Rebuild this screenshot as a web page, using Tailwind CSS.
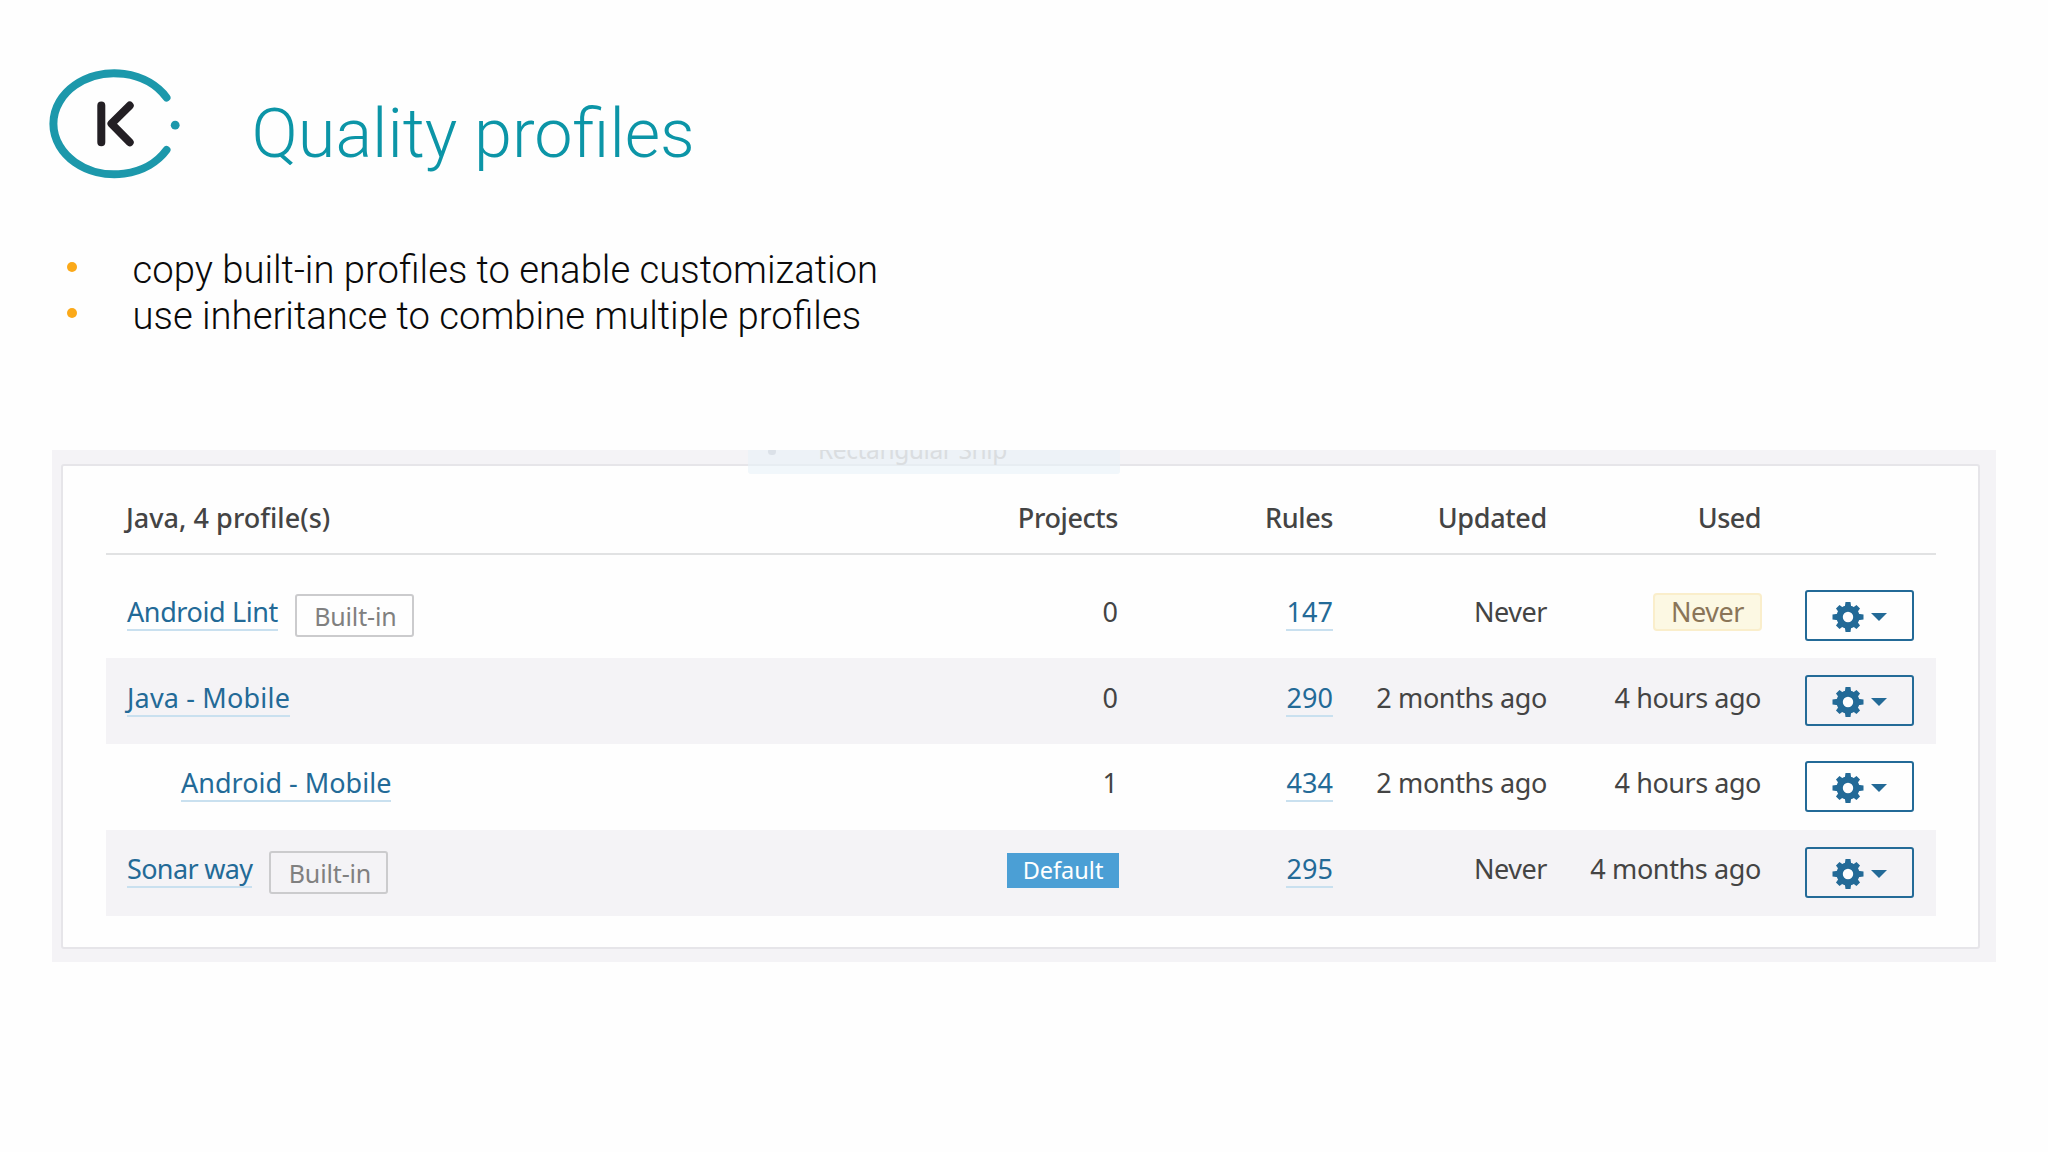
<!DOCTYPE html>
<html lang="en">
<head>
<meta charset="utf-8">
<title>Quality profiles</title>
<script src="https://cdn.jsdelivr.net/npm/@tailwindcss/browser@4"></script>
</head>
<body class="h-[1152px] w-[2048px] overflow-hidden bg-[#fefefe]">
<svg class="hidden">
  <symbol id="gear" viewBox="-16 -16 32 32">
    <circle r="6" fill="#fefefe"/>
    <path fill-rule="evenodd" d="M0-11.500a11.500 11.500 0 1 0 0 23a11.500 11.500 0 1 0 0-23zM0-5.200a5.200 5.200 0 1 1 0 10.400a5.200 5.200 0 1 1 0-10.400z"/>
    <path d="M-3.200-10l.7-5h5l.7 5zM-3.200 10l.7 5h5l.7-5zM-10-3.200l-5.500.7v5l5.500.7zM10-3.200l5.500.7v5l-5.500.7z"/>
    <path transform="rotate(45)" d="M-3.200-10l.7-4.500h5l.7 4.500zM-3.200 10l.7 4.500h5l.7-4.500zM-10-3.200l-4.500.7v5l4.500.7zM10-3.200l4.500.7v5l-4.500.7z"/>
  </symbol>
</svg>

<header class="flex h-[247px] pl-[46px] pt-[65px] font-[Roboto]">
  <svg class="h-[118px] w-[140px]" viewBox="46 65 140 118" fill="none" stroke-linecap="round" stroke-linejoin="round">
    <path d="M166.500 97.500A61 50.500 0 1 0 166.500 150" stroke="#1c98ab" stroke-width="8"/>
    <circle cx="175.200" cy="125.200" r="4.400" fill="#1c98ab"/>
    <path d="M101.300 105.600V142.300M129.700 105.600L111.500 123.700L129.700 142.300" stroke="#231f24" stroke-width="8"/>
  </svg>
  <h1 class="ml-[65.500px] mt-[29px] text-[68.400px] font-light leading-[80px] whitespace-nowrap text-[#0c95a7]">Quality profiles</h1>
</header>

<ul class="h-[203px] pl-[67px] font-[Roboto] text-[38.250px] font-light leading-[46px] text-[#0a0a0a]">
  <li class="flex"><span class="mr-[55.500px] mt-[15px] h-[10px] w-[10px] rounded-full bg-[#fba919]"></span>copy built-in profiles to enable customization</li>
  <li class="flex"><span class="mr-[55.500px] mt-[15px] h-[10px] w-[10px] rounded-full bg-[#fba919]"></span>use inheritance to combine multiple profiles</li>
</ul>

<section class="relative ml-[52px] h-[512px] w-[1944px] overflow-hidden bg-[#f4f3f6] pl-[9px] pt-[14px] font-['Noto_Sans'] text-[27px] leading-[38px] text-[#444]">
  <div class="h-[485px] w-[1919px] rounded-[3px] border-2 border-[#e6e5e9] bg-[#fefefe] px-[43px]">
    <div class="grid h-[89px] w-[1830px] grid-cols-[798px_214px_215px_214px_214px_1fr] border-b-2 border-[#e1e2e3] pt-[33px] text-right font-medium">
      <span class="pl-[20px] text-left tracking-[0.040px]">Java, 4 profile(s)</span>
      <span class="tracking-[-0.400px]">Projects</span>
      <span class="tracking-[-0.400px]">Rules</span>
      <span class="tracking-[-0.300px]">Updated</span>
      <span class="tracking-[-0.500px]">Used</span>
    </div>
    <div id="rows" class="w-[1830px] pt-[17.500px]"></div>
  </div>
  <div class="absolute left-[696px] top-0 h-[24px] w-[372px] overflow-hidden rounded-b-[3px] bg-[#e8f2f8]/60">
    <span class="absolute left-[20px] top-[-2px] h-[7px] w-[8px] rounded-full bg-[#dbe1e8]"></span>
    <span class="absolute left-[70px] top-[-19px] text-[24.500px] leading-[38px] tracking-[-0.400px] whitespace-nowrap text-[#dadde0]">Rectangular Ship</span>
  </div>
</section>

<script>
const link = (text, spacing) => `<a class="inline-block h-[38px] border-b-2 border-[#c9e0ef] text-[#236a97] whitespace-nowrap" style="letter-spacing:${spacing}px">${text}</a>`;
const builtIn = '<span class="ml-[17px] mt-[1px] flex h-[43px] w-[119px] items-center justify-center rounded-[3px] border-2 border-[#cbcbcd] pb-px pl-[2px] pt-[2px] text-[25px] tracking-[-0.150px] text-[#808080]">Built-in</span>';
const text = (value, spacing) => `<span style="letter-spacing:${spacing}px">${value}</span>`;
const never = '<span class="-mr-px inline-block h-[38px] w-[109px] rounded-[4px] border-2 border-[#faeecb] bg-[#fcf8e3] text-center leading-[34px] tracking-[-0.460px] text-[#8a7558]">Never</span>';
const defaultTag = '<span class="mt-[3px] -mr-px inline-block h-[35px] w-[112px] bg-[#4b9fd5] text-center text-[23.500px] leading-[34px] text-white">Default</span>';
const actions = `<button class="flex h-[51px] w-[109px] items-center rounded-[3px] border-2 border-[#236a97] pl-[25px] pt-[3px] text-[#236a97]">
  <svg class="h-[32px] w-[32px]" fill="currentColor"><use href="#gear"/></svg>
  <svg class="ml-[7px] h-[8px] w-[16px]" viewBox="0 0 16 8" fill="currentColor"><path d="M0 0H16L8 8Z"/></svg>
</button>`;
const rows = [
  { name: link('Android Lint', -0.4), tag: builtIn, projects: '0', rules: '147', updated: text('Never', -0.46), used: never },
  { name: link('Java - Mobile', 0.18), projects: '0', rules: '290', updated: text('2 months ago', -0.38), used: text('4 hours ago', -0.45) },
  { name: link('Android - Mobile', 0), child: true, projects: '1', rules: '434', updated: text('2 months ago', -0.38), used: text('4 hours ago', -0.45) },
  { name: link('Sonar way', -0.65), tag: builtIn, projects: defaultTag, rules: '295', updated: text('Never', -0.46), used: text('4 months ago', -0.38) },
];
document.getElementById('rows').innerHTML = rows.map((r, i) => `
  <div class="grid h-[85.750px] grid-cols-[798px_214px_215px_214px_214px_1fr] text-right ${i % 2 ? 'bg-[#f4f3f6]' : ''}">
    <div class="flex items-start pt-[20.250px] ${r.child ? 'pl-[75px]' : 'pl-[21px]'}">${r.name}${r.tag || ''}</div>
    <div class="pt-[20.250px]">${r.projects}</div>
    <div class="pt-[20.250px]">${link(r.rules, 0.06)}</div>
    <div class="pt-[20.250px]">${r.updated}</div>
    <div class="pt-[20.250px]">${r.used}</div>
    <div class="pl-[44px] pt-[17px]">${actions}</div>
  </div>`).join('');
</script>
</body>
</html>
